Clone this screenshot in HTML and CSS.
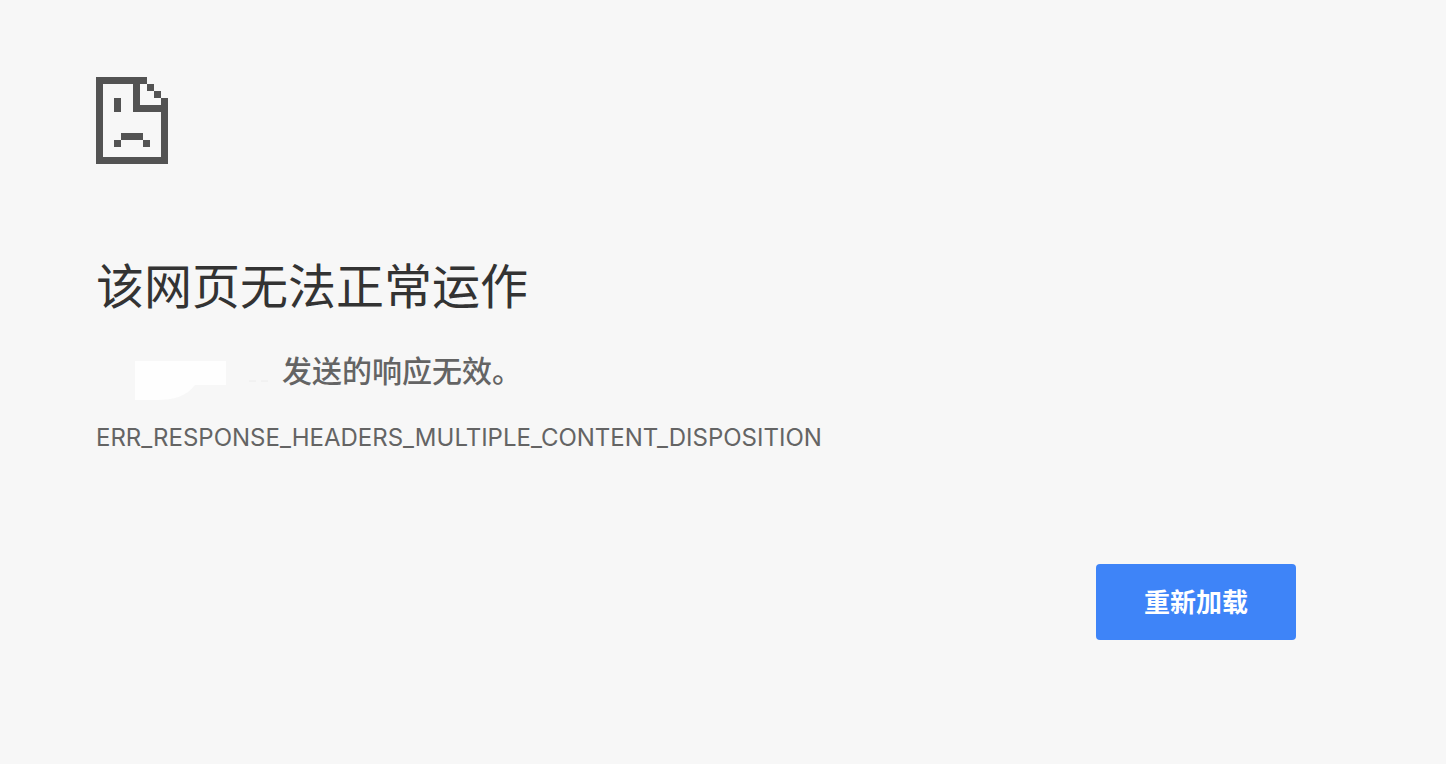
FILE: index.html
```html
<!DOCTYPE html>
<html lang="zh-CN">
<head>
<meta charset="utf-8">
<meta name="viewport" content="width=device-width, initial-scale=1">
<title>该网页无法正常运作</title>
<link rel="stylesheet" href="styles.css">
</head>
<body>
<main class="error-page">
  <svg class="error-icon" viewBox="0 0 72 87" shape-rendering="crispEdges" aria-hidden="true">
    <path d="M0 0H51V7H44V28H65V21H72V87H0ZM7 7V80H65V35H37V7Z" fill-rule="evenodd"/>
    <path d="M51 7h7v7h-7zM58 14h7v7h-7zM18 21h7v14h-7zM25 56h22v7h-22zM18 63h7v7h-7zM47 63h7v7h-7z"/>
  </svg>
  <h1 class="error-title">该网页无法正常运作</h1>
  <p class="error-summary">
    <svg class="hidden-host" viewBox="0 0 186 48" aria-hidden="true">
      <path class="patch" d="M39 16H130V40H99C91 51 78 55 60 55H39Z"/>
      <path class="smudge" d="M153 36h7M165 36h7"/>
    </svg>
    <span>发送的响应无效。</span>
  </p>
  <p class="error-code">ERR_RESPONSE_HEADERS_MULTIPLE_CONTENT_DISPOSITION</p>
  <div class="actions">
    <button class="reload" type="button">重新加载</button>
  </div>
</main>
</body>
</html>
```
FILE: styles.css
```css
body {
  margin: 0;
  background: #f7f7f7;
  color: #646464;
  font-family: "Noto Sans CJK SC", sans-serif;
}

.error-page {
  max-width: 1200px;
  padding: 77px 96px 48px;
}

.error-icon {
  display: block;
  width: 72px;
  height: 87px;
  fill: #535353;
}

.error-title {
  margin: 89px 0 32px;
  color: #333;
  font-size: 48px;
  font-weight: 400;
  line-height: 60px;
}

.error-summary {
  display: flex;
  align-items: center;
  margin: 0;
  font-size: 30px;
  font-weight: 500;
  line-height: 48px;
}

.hidden-host {
  flex: none;
  width: 186px;
  height: 48px;
  overflow: visible;
}

.patch {
  fill: #fefefe;
}

.smudge {
  stroke: #ececec;
}

.error-code {
  margin: 27px 0 0;
  font-family: Inter, sans-serif;
  font-size: 24px;
  line-height: 36px;
  overflow-wrap: anywhere;
}

.actions {
  display: flex;
  justify-content: flex-end;
  margin-top: 108px;
}

.reload {
  padding: 17px 48px 19px;
  border: 0;
  border-radius: 4px;
  background: #3e84f8;
  color: #fff;
  font: 700 26px/40px "Noto Sans CJK SC", sans-serif;
  cursor: pointer;
}
```
